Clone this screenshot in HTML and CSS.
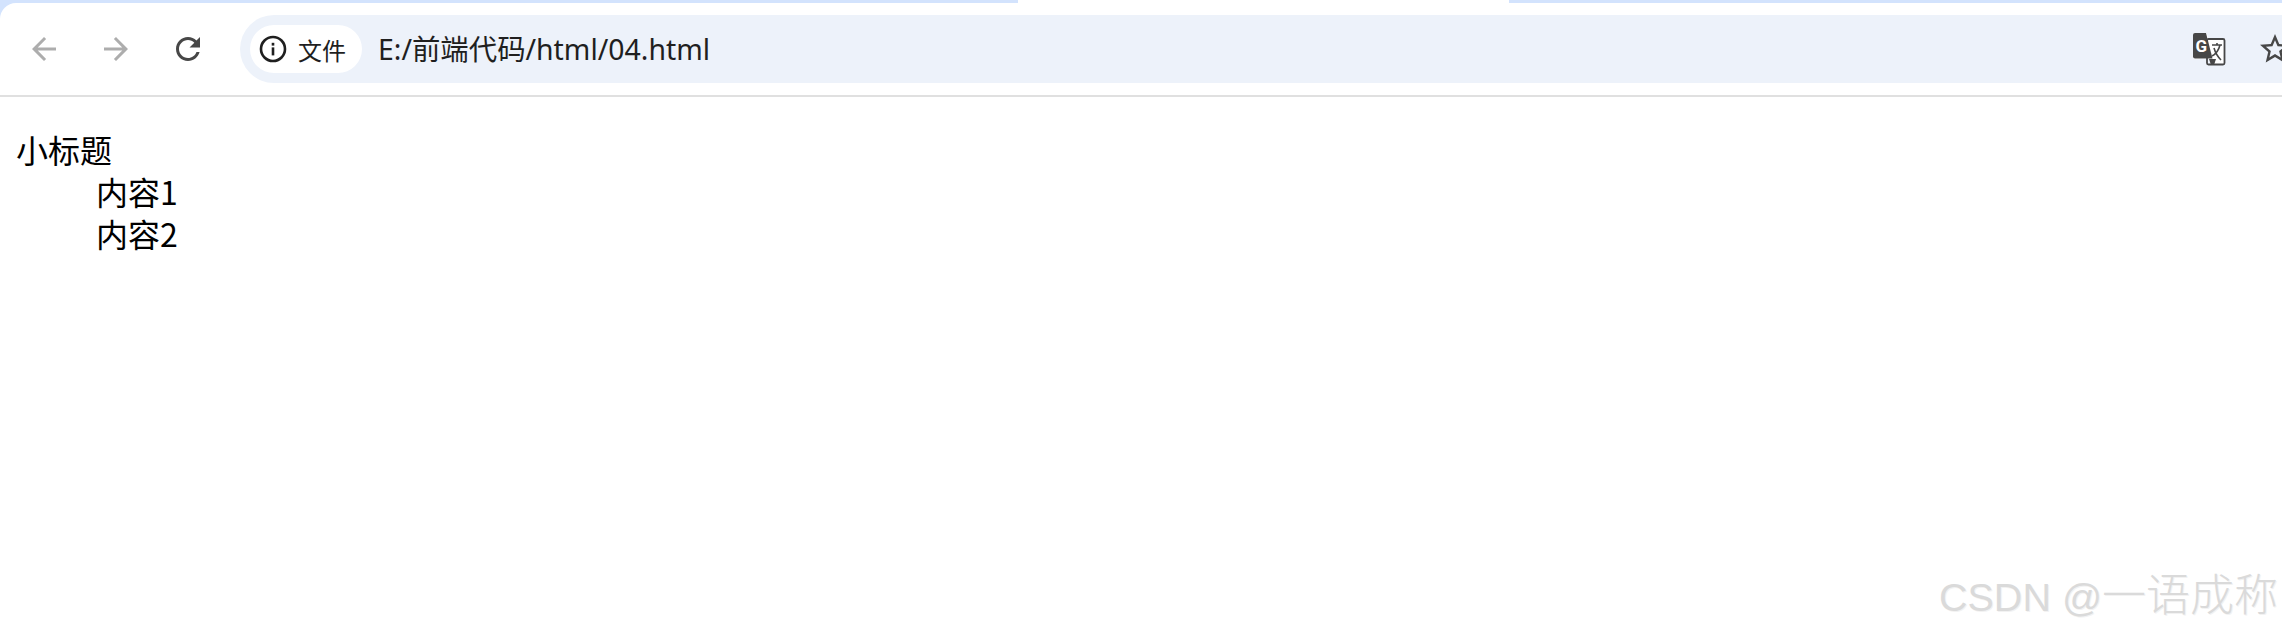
FILE: index.html
```html
<!DOCTYPE html>
<html lang="zh-CN">
    <head>
        <meta charset="utf-8" />
        <title>04.html</title>
        <link rel="stylesheet" href="styles.css">
    </head>

    <body>
        <header class="chrome">
            <div class="tabstrip">
                <div class="tab-side tab-left"></div>
                <div class="tab-active"></div>
                <div class="tab-side tab-right"></div>
            </div>
            <div class="toolbar">
                <svg class="icon icon-off" viewBox="0 0 24 24"><path d="M20 11H7.83l5.59-5.59L12 4l-8 8 8 8 1.41-1.41L7.83 13H20v-2z"/></svg>
                <svg class="icon icon-off" viewBox="0 0 24 24"><path d="M4 11h12.17l-5.59-5.59L12 4l8 8-8 8-1.41-1.41L16.17 13H4v-2z"/></svg>
                <svg class="icon" viewBox="0 0 24 24"><path d="M17.65 6.35C16.2 4.9 14.21 4 12 4c-4.42 0-7.99 3.58-7.99 8s3.57 8 7.99 8c3.73 0 6.84-2.55 7.73-6h-2.08c-.82 2.33-3.04 4-5.65 4-3.31 0-6-2.69-6-6s2.69-6 6-6c1.66 0 3.14.69 4.22 1.78L13 11h7V4l-2.35 2.35z"/></svg>
                <div class="omnibox">
                    <div class="chip">
                        <svg class="chip-icon" viewBox="0 0 28 28">
                            <circle cx="14" cy="14" r="12" fill="none" stroke="#1f1f1f" stroke-width="2.6"/>
                            <rect x="12.7" y="12.4" width="2.6" height="8" fill="#1f1f1f"/>
                            <rect x="12.7" y="7.8" width="2.6" height="2.8" fill="#1f1f1f"/>
                        </svg>
                        <span class="chip-text">文件</span>
                    </div>
                    <span class="address">E:/前端代码/html/04.html</span>
                    <svg class="translate" viewBox="0 0 34 34">
                        <path d="M3 1h11.5l2 6H31q2 0 2 2v22q0 2-2 2H19l-2-6H3q-2 0-2-2V3q0-2 2-2z" fill="#fff"/>
                        <rect x="15" y="7" width="17.500" height="25.500" rx="1.500" fill="none" stroke="#474747" stroke-width="1.800"/>
                        <path d="M3 1h11l6.500 25.500H3q-2 0-2-2V3q0-2 2-2z" fill="#474747"/>
                        <path d="M17 27l2 6h3l2-6z" fill="#474747"/>
                        <text class="translate-g" x="3.500" y="20">G</text>
                        <path d="M20 13h10M25 11v2M28 13q-2 8-8 11M22 16q2 7 7 12" fill="none" stroke="#474747" stroke-width="1.600"/>
                    </svg>
                    <svg class="icon star" viewBox="0 0 24 24"><path d="M22 9.240l-7.190-.62L12 2 9.190 8.630 2 9.240l5.460 4.730L5.820 21 12 17.270 18.180 21l-1.630-7.030L22 9.240zM12 15.400l-3.760 2.270 1-4.280-3.320-2.880 4.380-.38L12 6.100l1.710 4.040 4.380.38-3.320 2.880 1 4.280L12 15.400z"/></svg>
                </div>
            </div>
        </header>

        <dl class="list">
            <dt>小标题</dt>
            <dd>内容1</dd>
            <dd>内容2</dd>
        </dl>

        <div class="watermark"><span class="watermark-latin">CSDN @</span>一语成称</div>
    </body>
</html>
```

FILE: styles.css
```css
html,
body {
    height: 100%;
}
body {
    margin: 0;
    background: #ffffff;
    overflow: hidden;
    font-family: "Noto Sans CJK SC", sans-serif;
    color: #000000;
}
.chrome {
    background: #d3e3fd;
    border-bottom: 2px solid #e0e0e0;
}
.tabstrip {
    display: flex;
    height: 3px;
}
.tab-side {
    background: #d3e3fd;
}
.tab-left {
    width: 1018px;
}
.tab-active {
    width: 491px;
    background: #ffffff;
}
.tab-right {
    flex: 1;
}
.toolbar {
    display: flex;
    align-items: center;
    height: 92px;
    padding-left: 26px;
    background: #ffffff;
    border-top-left-radius: 16px;
}
.icon {
    width: 36px;
    height: 36px;
    margin-right: 36px;
    fill: #474747;
    flex: none;
}
.icon-off {
    fill: #adadad;
}
.omnibox {
    display: flex;
    align-items: center;
    flex: 1;
    height: 68px;
    margin-left: -2px;
    margin-right: -40px;
    padding-left: 10px;
    background: #edf2fa;
    border-radius: 34px;
}
.chip {
    display: flex;
    align-items: center;
    height: 48px;
    padding: 0 16px 0 9px;
    background: #ffffff;
    border-radius: 24px;
}
.chip-icon {
    width: 28px;
    height: 28px;
    margin-right: 11px;
}
.chip-text {
    font-size: 24px;
    color: #1f1f1f;
}
.address {
    flex: 1;
    margin-left: 16px;
    padding-bottom: 3px;
    font-family: "Noto Sans", "Noto Sans CJK SC", sans-serif;
    font-size: 28.400px;
    color: #1f1f1f;
}
.translate {
    width: 34px;
    height: 34px;
    margin-right: 31px;
    flex: none;
}
.translate-g {
    font-family: "Roboto", sans-serif;
    font-size: 17px;
    font-weight: 700;
    fill: #ffffff;
}
.star {
    margin-right: 29px;
}
.list {
    margin: 31px 0 0 16px;
    font-size: 32px;
    line-height: 42px;
}
.list dd {
    margin-left: 80px;
}
.watermark {
    position: absolute;
    right: 4px;
    bottom: 9px;
    font-family: "Noto Sans CJK SC", sans-serif;
    font-size: 44px;
    font-weight: 300;
    line-height: 60px;
    color: #dadada;
    text-shadow: 1px 1px 0 #f2f2f2;
}
.watermark-latin {
    font-family: "Liberation Sans", sans-serif;
    font-size: 39.500px;
    font-weight: 400;
}
```
